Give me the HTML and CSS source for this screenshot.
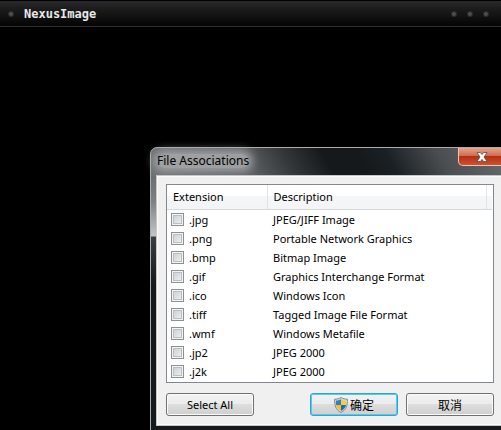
FILE: index.html
```html
<!DOCTYPE html>
<html lang="zh-CN">
<head>
<meta charset="UTF-8" />
<meta name="viewport" content="width=device-width, initial-scale=1" />
<title>NexusImage</title>
<link rel="stylesheet" href="styles.css">
</head>
<body>
<header class="app-bar">
  <span class="dot"></span>
  <h1 class="app-title">NexusImage</h1>
  <div class="app-controls">
    <button class="dot" type="button" aria-label="Minimize"></button>
    <button class="dot" type="button" aria-label="Maximize"></button>
    <button class="dot" type="button" aria-label="Close"></button>
  </div>
</header>

<main class="workspace">
  <section class="dialog" role="dialog" aria-labelledby="dialogTitle">
    <div class="dialog-bar">
      <h2 class="dialog-title" id="dialogTitle">File Associations</h2>
      <button class="dialog-close" type="button" aria-label="Close dialog">
        <svg width="12" height="10" viewBox="0 0 12 10" aria-hidden="true">
          <path d="M1 .5h3.400L6 2.600 7.600.5H11L8 5l3 4.500H7.600L6 7.400 4.400 9.500H1L4 5z" fill="#fff" stroke="#5b4a4a" stroke-width=".8"/>
        </svg>
      </button>
    </div>
    <div class="dialog-body">
      <div class="list">
        <table class="ext-table">
          <thead>
            <tr><th class="col-ext">Extension</th><th>Description</th><th class="col-end"></th></tr>
          </thead>
          <tbody>
            <tr><td><label><input type="checkbox">.jpg</label></td><td colspan="2">JPEG/JIFF Image</td></tr>
            <tr><td><label><input type="checkbox">.png</label></td><td colspan="2">Portable Network Graphics</td></tr>
            <tr><td><label><input type="checkbox">.bmp</label></td><td colspan="2">Bitmap Image</td></tr>
            <tr><td><label><input type="checkbox">.gif</label></td><td colspan="2">Graphics Interchange Format</td></tr>
            <tr><td><label><input type="checkbox">.ico</label></td><td colspan="2">Windows Icon</td></tr>
            <tr><td><label><input type="checkbox">.tiff</label></td><td colspan="2">Tagged Image File Format</td></tr>
            <tr><td><label><input type="checkbox">.wmf</label></td><td colspan="2">Windows Metafile</td></tr>
            <tr><td><label><input type="checkbox">.jp2</label></td><td colspan="2">JPEG 2000</td></tr>
            <tr><td><label><input type="checkbox">.j2k</label></td><td colspan="2">JPEG 2000</td></tr>
          </tbody>
        </table>
      </div>
      <div class="actions">
        <button class="btn btn-all" type="button">Select All</button>
        <button class="btn btn-ok" type="button">
          <svg width="14" height="16" viewBox="0 0 14 16" aria-hidden="true">
            <path d="M7 .5C5 1.800 3 2.200.6 2.200.4 8 1.500 12.800 7 15.500 12.500 12.800 13.600 8 13.400 2.200 11 2.200 9 1.800 7 .5z" fill="#d8dde0" stroke="#83898f"/>
            <path d="M7 2.200V8H2C1.800 6.600 1.800 5 1.900 3.500 4 3.400 5.500 3 7 2.200z" fill="#2d7fd0"/>
            <path d="M7 2.200V8h5c.2-1.400.2-3 .1-4.500C10 3.400 8.500 3 7 2.200z" fill="#f8ce35"/>
            <path d="M7 8v5.900C4 12.400 2.500 10.500 2 8z" fill="#f5c021"/>
            <path d="M7 8v5.900c3-1.500 4.500-3.400 5-5.900z" fill="#1f68bd"/>
          </svg>
          确定
        </button>
        <button class="btn" type="button">取消</button>
      </div>
    </div>
  </section>
</main>
</body>
</html>
```
FILE: styles.css
```css
* {
  box-sizing: border-box;
}

body {
  margin: 0;
  min-height: 100vh;
  overflow: hidden;
  background: #000;
  color: #000;
  font-family: "Noto Sans", "Noto Sans CJK SC", sans-serif;
  font-size: 12px;
}

button {
  font: inherit;
  padding: 0;
  cursor: pointer;
}

.app-bar {
  display: flex;
  align-items: center;
  gap: 10px;
  height: 27px;
  padding: 0 12px 0 8px;
  background: linear-gradient(#29292b, #19191a 40%, #040404);
  border-top: 1px solid #000;
  border-bottom: 1px solid #303030;
}

.app-title {
  flex: 1;
  margin: 0;
  color: #e8e8e8;
  font: bold 12px/16px "DejaVu Sans Mono", monospace;
}

.app-controls {
  display: flex;
  gap: 10px;
}

.dot {
  width: 6px;
  height: 6px;
  border: 1px solid #292b2b;
  border-radius: 50%;
  background: #4c4f4f;
}

/* the dialog runs past the right edge of the window */
.workspace {
  padding: 120px 0 0 150px;
}

.dialog {
  margin-right: -12px;
  padding: 0 6px 4px 5px;
  border: 1px solid #a9adb0;
  border-radius: 7px 7px 0 0;
  background:
    linear-gradient(#6b6e71, #7d8083 25px, #c3c5c7 60px, #3a3e41 61px, #15191c 110px) 0 28px / 6px 100% no-repeat,
    linear-gradient(60deg, #6d7073 0, #5c5f62 90px, #34383b 125px, #15191c 160px, transparent 180px) top left / 190px 28px no-repeat,
    linear-gradient(60deg, #15191c 190px, #1b2024 215px, #4a4e51 260px, #65686b 310px) top / 100% 28px no-repeat,
    #15191c;
}

.dialog-bar {
  display: flex;
  justify-content: space-between;
  align-items: flex-start;
  height: 27px;
}

/* soft light halo behind the caption */
.dialog-title {
  margin: 6px 0 0 1px;
  border-radius: 8px;
  background: rgba(172, 174, 176, 0.8);
  box-shadow: 0 0 8px 4px rgba(172, 174, 176, 0.8);
  font-size: 12px;
  font-weight: 400;
  line-height: 14px;
}

.dialog-close {
  display: flex;
  align-items: center;
  justify-content: center;
  width: 48px;
  height: 18px;
  border: 1px solid #efc3b5;
  border-top: 0;
  border-radius: 0 0 5px 5px;
  background: linear-gradient(#e3a58f, #cf6d50 45%, #b52f13 50%, #cc5230);
}

.dialog-body {
  padding: 8px 11px 9px 9px;
  border: 1px solid #c4c7c9;
  background: #f0f0f0;
  box-shadow: inset 0 0 0 1px #fafafa;
  position: relative;
}

.list {
  padding: 0 1px 0 0;
  height: 199px;
  border: 1px solid #828790;
  background: #fff;
  font-size: 11px;
}

.ext-table {
  width: 100%;
  border-collapse: collapse;
  table-layout: fixed;
}

.ext-table th {
  height: 24px;
  padding: 0 6px;
  border-right: 1px solid #e1e4e7;
  border-bottom: 1px solid #d5d8dc;
  background: linear-gradient(#fff 45%, #f5f6f8 45%, #f3f4f6);
  font-weight: 400;
  text-align: left;
}

.ext-table .col-ext {
  width: 100px;
}

.ext-table .col-end {
  width: 6px;
  padding: 0;
  border-right: 0;
}

.ext-table td {
  height: 19px;
  padding: 0 6px 0 4px;
  line-height: 19px;
}

.ext-table td + td {
  padding-left: 6px;
}

.ext-table label {
  display: flex;
  align-items: center;
  gap: 5px;
}

.ext-table input {
  appearance: none;
  width: 13px;
  height: 13px;
  margin: 0;
  border: 1px solid #8e8f8f;
  background: linear-gradient(135deg, #c6cbd0, #f3f4f5);
  box-shadow: inset 0 0 0 1px #f4f4f4, inset 0 0 0 2px #b9bec3;
}

.ext-table input:checked {
  background: #4a6fa0;
}

.actions {
  display: flex;
  gap: 8px;
  margin-top: 10px;
}

.btn {
  display: flex;
  align-items: center;
  justify-content: center;
  gap: 2px;
  width: 88px;
  height: 23px;
  border: 1px solid #707070;
  border-radius: 3px;
  background: linear-gradient(#f3f3f3, #ebebeb 49%, #dddddd 50%, #cfcfcf);
  box-shadow: inset 0 0 0 1px #fbfbfb;
}

.btn:hover {
  border-color: #3c7fb1;
}

.btn-all {
  margin-right: auto;
  font-size: 11px;
}

.btn-ok {
  border-color: #3c9fc8;
  box-shadow: inset 0 0 0 1px #45d1f5;
}
```
